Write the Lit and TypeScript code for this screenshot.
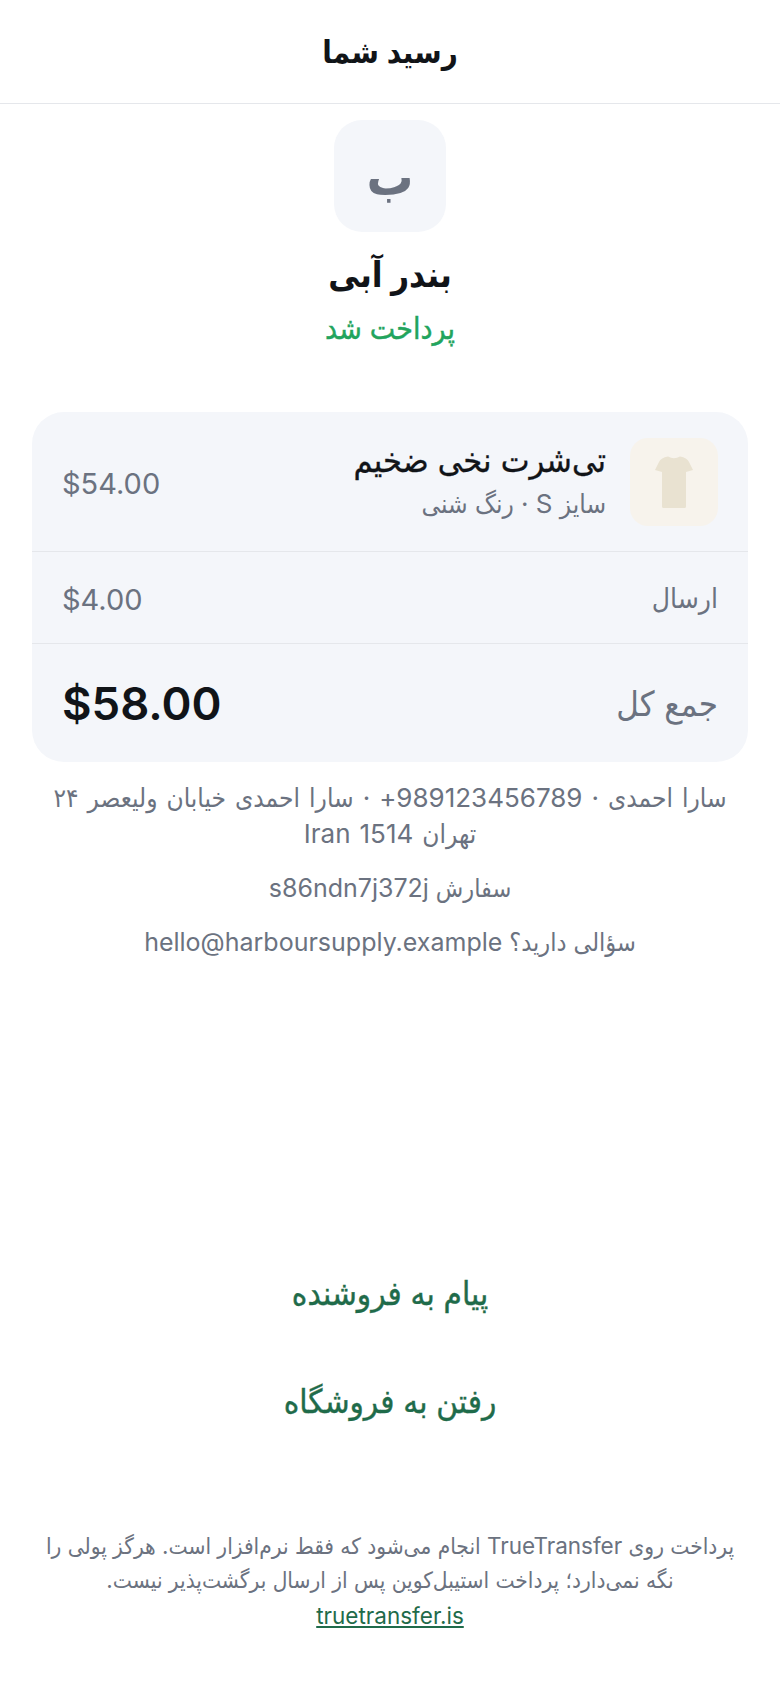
import { LitElement, html, css } from "lit";
import { customElement } from "lit/decorators.js";

@customElement("app-root")
export class AppRoot extends LitElement {
  static styles = css`
    :host {
      display: block;
      width: 780px;
      height: 1688px;
      background: #fff;
      color: #111418;
      font-family: Inter, "DejaVu Sans Condensed", "DejaVu Sans", sans-serif;
      direction: rtl;
    }
    .page { display: flex; flex-direction: column; height: 1688px; }
    .header {
      height: 104px;
      box-sizing: border-box;
      border-bottom: 1px solid #e5e7eb;
      display: flex; align-items: center; justify-content: center;
      font-size: 31px; font-weight: 600;
    }
    .hero { display: flex; flex-direction: column; align-items: center; padding-top: 16px; }
    .logo {
      width: 112px; height: 112px; border-radius: 28px; background: #f4f6fa;
      display: flex; align-items: center; justify-content: center;
      font-size: 52px; font-weight: 600; color: #6b7280;
    }
    .store { font-size: 35px; font-weight: 700; margin-top: 17px; line-height: 50px; }
    .paid { font-size: 30px; font-weight: 500; -webkit-text-stroke: 0.4px #22a45d; color: #22a45d; margin-top: 10px; line-height: 38px; }
    .card {
      margin: 65px 32px 0; background: #f4f6fa; border-radius: 32px; overflow: hidden;
    }
    .row {
      display: flex; align-items: center; justify-content: space-between;
      padding: 0 30px; border-top: 1px solid #e5e7eb;
    }
    .row:first-child { border-top: 0; height: 139px; }
    .row.ship { height: 91px; }
    .row.total { height: 118px; }
    .item { display: flex; align-items: center; gap: 24px; }
    .thumb {
      width: 88px; height: 88px; border-radius: 18px; background: #f7f3ec;
      display: flex; align-items: center; justify-content: center;
    }
    .thumb svg { display: block; }
    .copy { padding-bottom: 3px; }
    .name { font-size: 34px; font-weight: 500; -webkit-text-stroke: 0.3px #111418; line-height: 44px; margin-bottom: 3px; }
    .variant { font-size: 26px; color: #6b7280; line-height: 38px; }
    .muted { font-size: 28px; color: #6b7280; }
    .price { font-size: 29px; color: #6b7280; direction: ltr; padding-top: 4px; }
    .grand { font-size: 45.5px; font-weight: 600; color: #111418; direction: ltr; }
    .big { font-size: 34.5px; color: #6b7280; }
    .meta {
      margin: 18px 48px 0; text-align: center; font-size: 25px; line-height: 36px; color: #6b7280;
      display: flex; flex-direction: column; gap: 18px;
    }
    .meta p { margin: 0; }
    .meta .addr { font-size: 26px; word-spacing: 1.7px; }
    .spacer { flex: 1; }
    .actions { display: flex; flex-direction: column; align-items: center; gap: 0; }
    .action { height: 108px; display: flex; align-items: center; font-size: 33px; font-weight: 500; -webkit-text-stroke: 0.4px #1f6b4a; color: #1f6b4a; }
    .foot {
      margin: 74px 40px 55px; text-align: center; font-size: 22.5px; line-height: 34px; color: #6b7280;
    }
    .foot a { color: #1f6b4a; text-decoration: underline; display: block; margin-top: 2px; }
  `;

  render() {
    return html`
      <div class="page">
        <div class="header">رسید شما</div>
        <div class="hero">
          <div class="logo">ب</div>
          <div class="store">بندر آبی</div>
          <div class="paid">پرداخت شد</div>
        </div>
        <div class="card">
          <div class="row">
            <div class="item">
              <div class="thumb">
                <svg width="38" height="52" viewBox="0 0 38 52">
                  <path fill="#e9e2d1" d="M13 .5Q19 4 25 .5Q32 1.5 34 6L38 14L31 16L31 50.5Q31 52 29.5 52L8.5 52Q7 52 7 50.5L7 16L0 14L4 6Q6 1.5 13 .5Z"/>
                </svg>
              </div>
              <div class="copy">
                <div class="name">تی‌شرت نخی ضخیم</div>
                <div class="variant">سایز S · رنگ شنی</div>
              </div>
            </div>
            <div class="price">$54.00</div>
          </div>
          <div class="row ship">
            <div class="muted">ارسال</div>
            <div class="price">$4.00</div>
          </div>
          <div class="row total">
            <div class="big">جمع کل</div>
            <div class="grand">$58.00</div>
          </div>
        </div>
        <div class="meta">
          <p class="addr">سارا احمدی · 989123456789+ · سارا احمدی خیابان ولیعصر ۲۴ تهران 1514 Iran</p>
          <p>سفارش s86ndn7j372j</p>
          <p>سؤالی دارید؟ hello@harboursupply.example</p>
        </div>
        <div class="spacer"></div>
        <div class="actions">
          <div class="action">پیام به فروشنده</div>
          <div class="action">رفتن به فروشگاه</div>
        </div>
        <div class="foot">
          پرداخت روی TrueTransfer انجام می‌شود که فقط نرم‌افزار است. هرگز پولی را نگه نمی‌دارد؛ پرداخت استیبل‌کوین پس از ارسال برگشت‌پذیر نیست.
          <a>truetransfer.is</a>
        </div>
      </div>
    `;
  }
}
